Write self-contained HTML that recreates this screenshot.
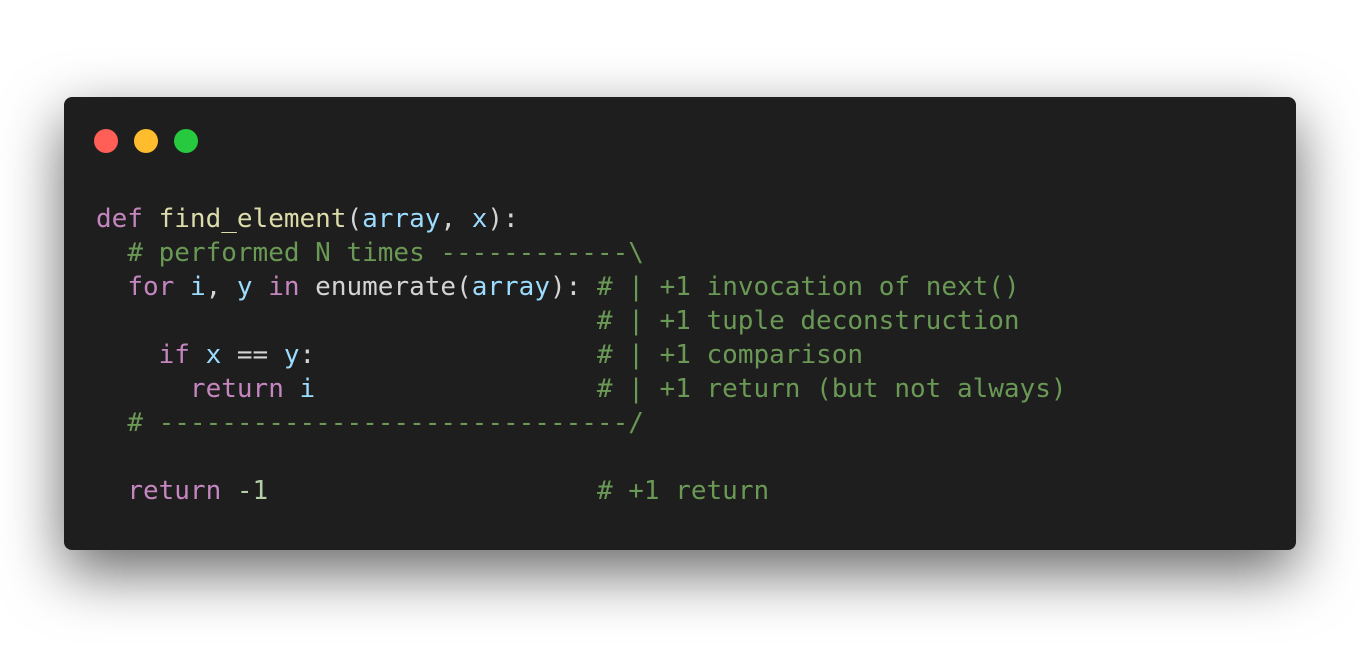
<!DOCTYPE html>
<html><head><style>
html,body{margin:0;padding:0;background:#fff;width:1360px;height:646px;overflow:hidden}
.win{position:absolute;left:64px;top:97px;width:1232px;height:453px;background:#1e1e1e;border-radius:8px;box-shadow:0 22px 60px rgba(0,0,0,0.6)}
.dot{position:absolute;top:32px;width:24px;height:24px;border-radius:50%}
pre{position:absolute;left:32px;top:105px;margin:0;font-family:"DejaVu Sans Mono","Liberation Mono",monospace;font-size:26px;line-height:34px;color:#d4d4d4}
.k{color:#c586c0}.f{color:#dcdcaa}.v{color:#9cdcfe}.c{color:#6a9955}.n{color:#b5cea8}
</style></head><body>
<div class="win">
<div class="dot" style="left:30px;background:#ff5f56"></div>
<div class="dot" style="left:70px;background:#ffbd2e"></div>
<div class="dot" style="left:110px;background:#27c93f"></div>
<pre><span class="k">def</span> <span class="f">find_element</span>(<span class="v">array</span>, <span class="v">x</span>):
  <span class="c"># performed N times ------------\</span>
  <span class="k">for</span> <span class="v">i</span>, <span class="v">y</span> <span class="k">in</span> enumerate(<span class="v">array</span>): <span class="c"># | +1 invocation of next()</span>
                                <span class="c"># | +1 tuple deconstruction</span>
    <span class="k">if</span> <span class="v">x</span> == <span class="v">y</span>:                  <span class="c"># | +1 comparison</span>
      <span class="k">return</span> <span class="v">i</span>                  <span class="c"># | +1 return (but not always)</span>
  <span class="c"># ------------------------------/</span>

  <span class="k">return</span> <span class="n">-1</span>                     <span class="c"># +1 return</span></pre>
</div>
</body></html>
